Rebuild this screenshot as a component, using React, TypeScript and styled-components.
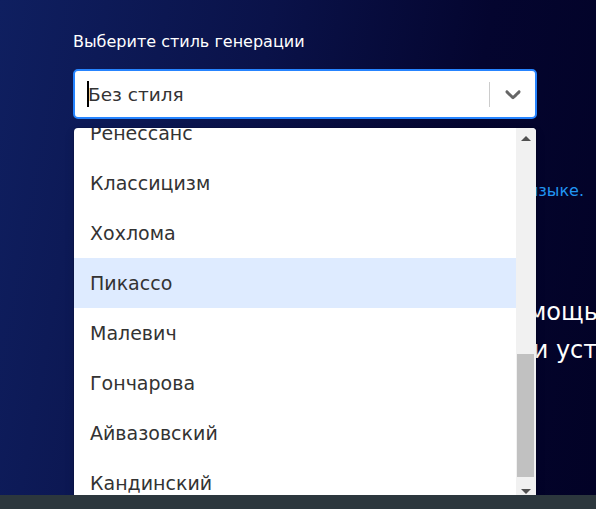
import { useLayoutEffect, useRef } from "react";
import styled, { createGlobalStyle } from "styled-components";

const styles = [
  "Без стиля",
  "Детальное фото",
  "Аниме",
  "Киберпанк",
  "Мультфильм",
  "Портретное фото",
  "Студийное фото",
  "Масляная живопись",
  "Акварель",
  "Пастель",
  "Импрессионизм",
  "Барокко",
  "Ренессанс",
  "Классицизм",
  "Хохлома",
  "Пикассо",
  "Малевич",
  "Гончарова",
  "Айвазовский",
  "Кандинский",
];

const MENU_HEIGHT = 373;
const OPTION_HEIGHT = 50;
const LIST_PADDING = 4;
const SCROLL_TOP = 624;
const BUTTON = 20;

const App: React.FC = () => {
  const listRef = useRef<HTMLDivElement>(null);

  useLayoutEffect(() => {
    if (listRef.current) listRef.current.scrollTop = SCROLL_TOP;
  }, []);

  const contentHeight = styles.length * OPTION_HEIGHT + LIST_PADDING * 2;
  const track = MENU_HEIGHT - BUTTON * 2;
  const thumbHeight = Math.round((track * MENU_HEIGHT) / contentHeight);
  const thumbTop = Math.round((track * SCROLL_TOP) / contentHeight);

  return (
    <>
      <GlobalStyle />
      <Page>
        <Column>
          <Label>Выберите стиль генерации</Label>
          <SelectWrap>
            <Control>
              <Value>
                <Caret />
                Без стиля
              </Value>
              <Separator />
              <Indicator>
                <svg width="26" height="26" viewBox="0 0 20 20" fill="#666">
                  <path d="M4.516 7.548c0.436-0.446 1.043-0.481 1.576 0l3.908 3.747 3.908-3.747c0.533-0.481 1.141-0.446 1.574 0 0.436 0.445 0.408 1.197 0 1.615-0.406 0.418-4.695 4.502-4.695 4.502-0.217 0.223-0.502 0.335-0.787 0.335s-0.57-0.112-0.789-0.335c0 0-4.287-4.084-4.695-4.502s-0.436-1.17 0-1.615z" />
                </svg>
              </Indicator>
            </Control>
            <Menu>
              <List ref={listRef}>
                {styles.map((name) => (
                  <Option key={name} $focused={name === "Пикассо"}>
                    {name}
                  </Option>
                ))}
              </List>
              <ScrollBar>
                <ArrowButton $dir="up" />
                <Track>
                  <Thumb style={{ marginTop: thumbTop, height: thumbHeight }} />
                </Track>
                <ArrowButton $dir="down" />
              </ScrollBar>
            </Menu>
          </SelectWrap>
          <Hint>Пишите запрос на русском или английском языке.</Hint>
          <Heading>
            <HeadLine $width={545}>Создавайте изображения с помощью</HeadLine>
            <HeadLine $width={640}>нейросети на компьютере и устройствах</HeadLine>
          </Heading>
        </Column>
        <Footer />
      </Page>
    </>
  );
};

export default App;

const GlobalStyle = createGlobalStyle`
  html, body {
    margin: 0;
    height: 509px;
    overflow: hidden;
  }
  body {
    font-family: "DejaVu Sans", "Noto Sans", sans-serif;
    background: linear-gradient(100deg, #0f1f60 0%, #0a1249 40%, #04052f 72%, #020226 100%);
  }
`;

const Page = styled.div`
  height: 509px;
  overflow: hidden;
`;

const Column = styled.div`
  padding: 32px 0 0 73px;
  width: 464px;
`;

const Label = styled.div`
  font-size: 16px;
  line-height: 20px;
  color: #ffffff;
  margin-bottom: 17px;
`;

const SelectWrap = styled.div`
  position: relative;
`;

const Control = styled.div`
  box-sizing: border-box;
  height: 50px;
  display: flex;
  align-items: center;
  background: #ffffff;
  border: 2px solid #2684ff;
  border-radius: 5px;
`;

const Value = styled.div`
  flex: 1;
  display: flex;
  align-items: center;
  padding-left: 12px;
  font-size: 18.5px;
  color: #333333;
`;

const Caret = styled.span`
  width: 2px;
  height: 26px;
  background: #000000;
  margin-right: -1px;
`;

const Separator = styled.span`
  width: 1px;
  height: 25px;
  background: #cccccc;
`;

const Indicator = styled.div`
  width: 45px;
  display: flex;
  justify-content: center;
  align-items: center;
`;

const Menu = styled.div`
  position: absolute;
  top: calc(100% + 9px);
  left: 1px;
  right: 1px;
  height: ${MENU_HEIGHT}px;
  display: flex;
  overflow: hidden;
  background: #ffffff;
  border-radius: 4px;
  box-shadow: 0 0 0 1px rgba(0, 0, 0, 0.1), 0 4px 11px rgba(0, 0, 0, 0.1);
  z-index: 2;
`;

const List = styled.div`
  flex: 1;
  box-sizing: border-box;
  padding: ${LIST_PADDING}px 0;
  overflow: hidden;
`;

const Option = styled.div<{ $focused?: boolean }>`
  height: ${OPTION_HEIGHT}px;
  display: flex;
  align-items: center;
  padding-left: 16px;
  font-size: 19px;
  color: #333333;
  background: ${(p) => (p.$focused ? "#deebff" : "transparent")};
`;

const ScrollBar = styled.div`
  width: 20px;
  display: flex;
  flex-direction: column;
  background: #f1f1f1;
`;

const ArrowButton = styled.div<{ $dir: "up" | "down" }>`
  height: ${BUTTON}px;
  display: flex;
  justify-content: center;
  align-items: center;

  &::before {
    content: "";
    width: 0;
    height: 0;
    border-left: 5px solid transparent;
    border-right: 5px solid transparent;
    margin-top: 1px;
    ${(p) =>
      p.$dir === "up"
        ? "border-bottom: 5px solid #505050;"
        : "border-top: 5px solid #505050;"}
  }
`;

const Track = styled.div`
  flex: 1;
  display: flex;
  flex-direction: column;
  padding: 0 2px 0 1px;
`;

const Thumb = styled.div`
  background: #c1c1c1;
`;

const Hint = styled.div`
  margin-top: 61px;
  width: 511px;
  text-align: right;
  white-space: nowrap;
  font-size: 16px;
  line-height: 22px;
  color: #2196f3;
`;

const Heading = styled.div`
  margin-top: 91px;
  font-size: 24px;
  line-height: 38px;
  color: #ffffff;
`;

const HeadLine = styled.div<{ $width: number }>`
  width: ${(p) => p.$width}px;
  text-align: right;
  white-space: nowrap;
`;

const Footer = styled.div`
  position: fixed;
  left: 0;
  right: 0;
  bottom: 0;
  height: 14px;
  background: #2c373d;
  z-index: 5;
`;
